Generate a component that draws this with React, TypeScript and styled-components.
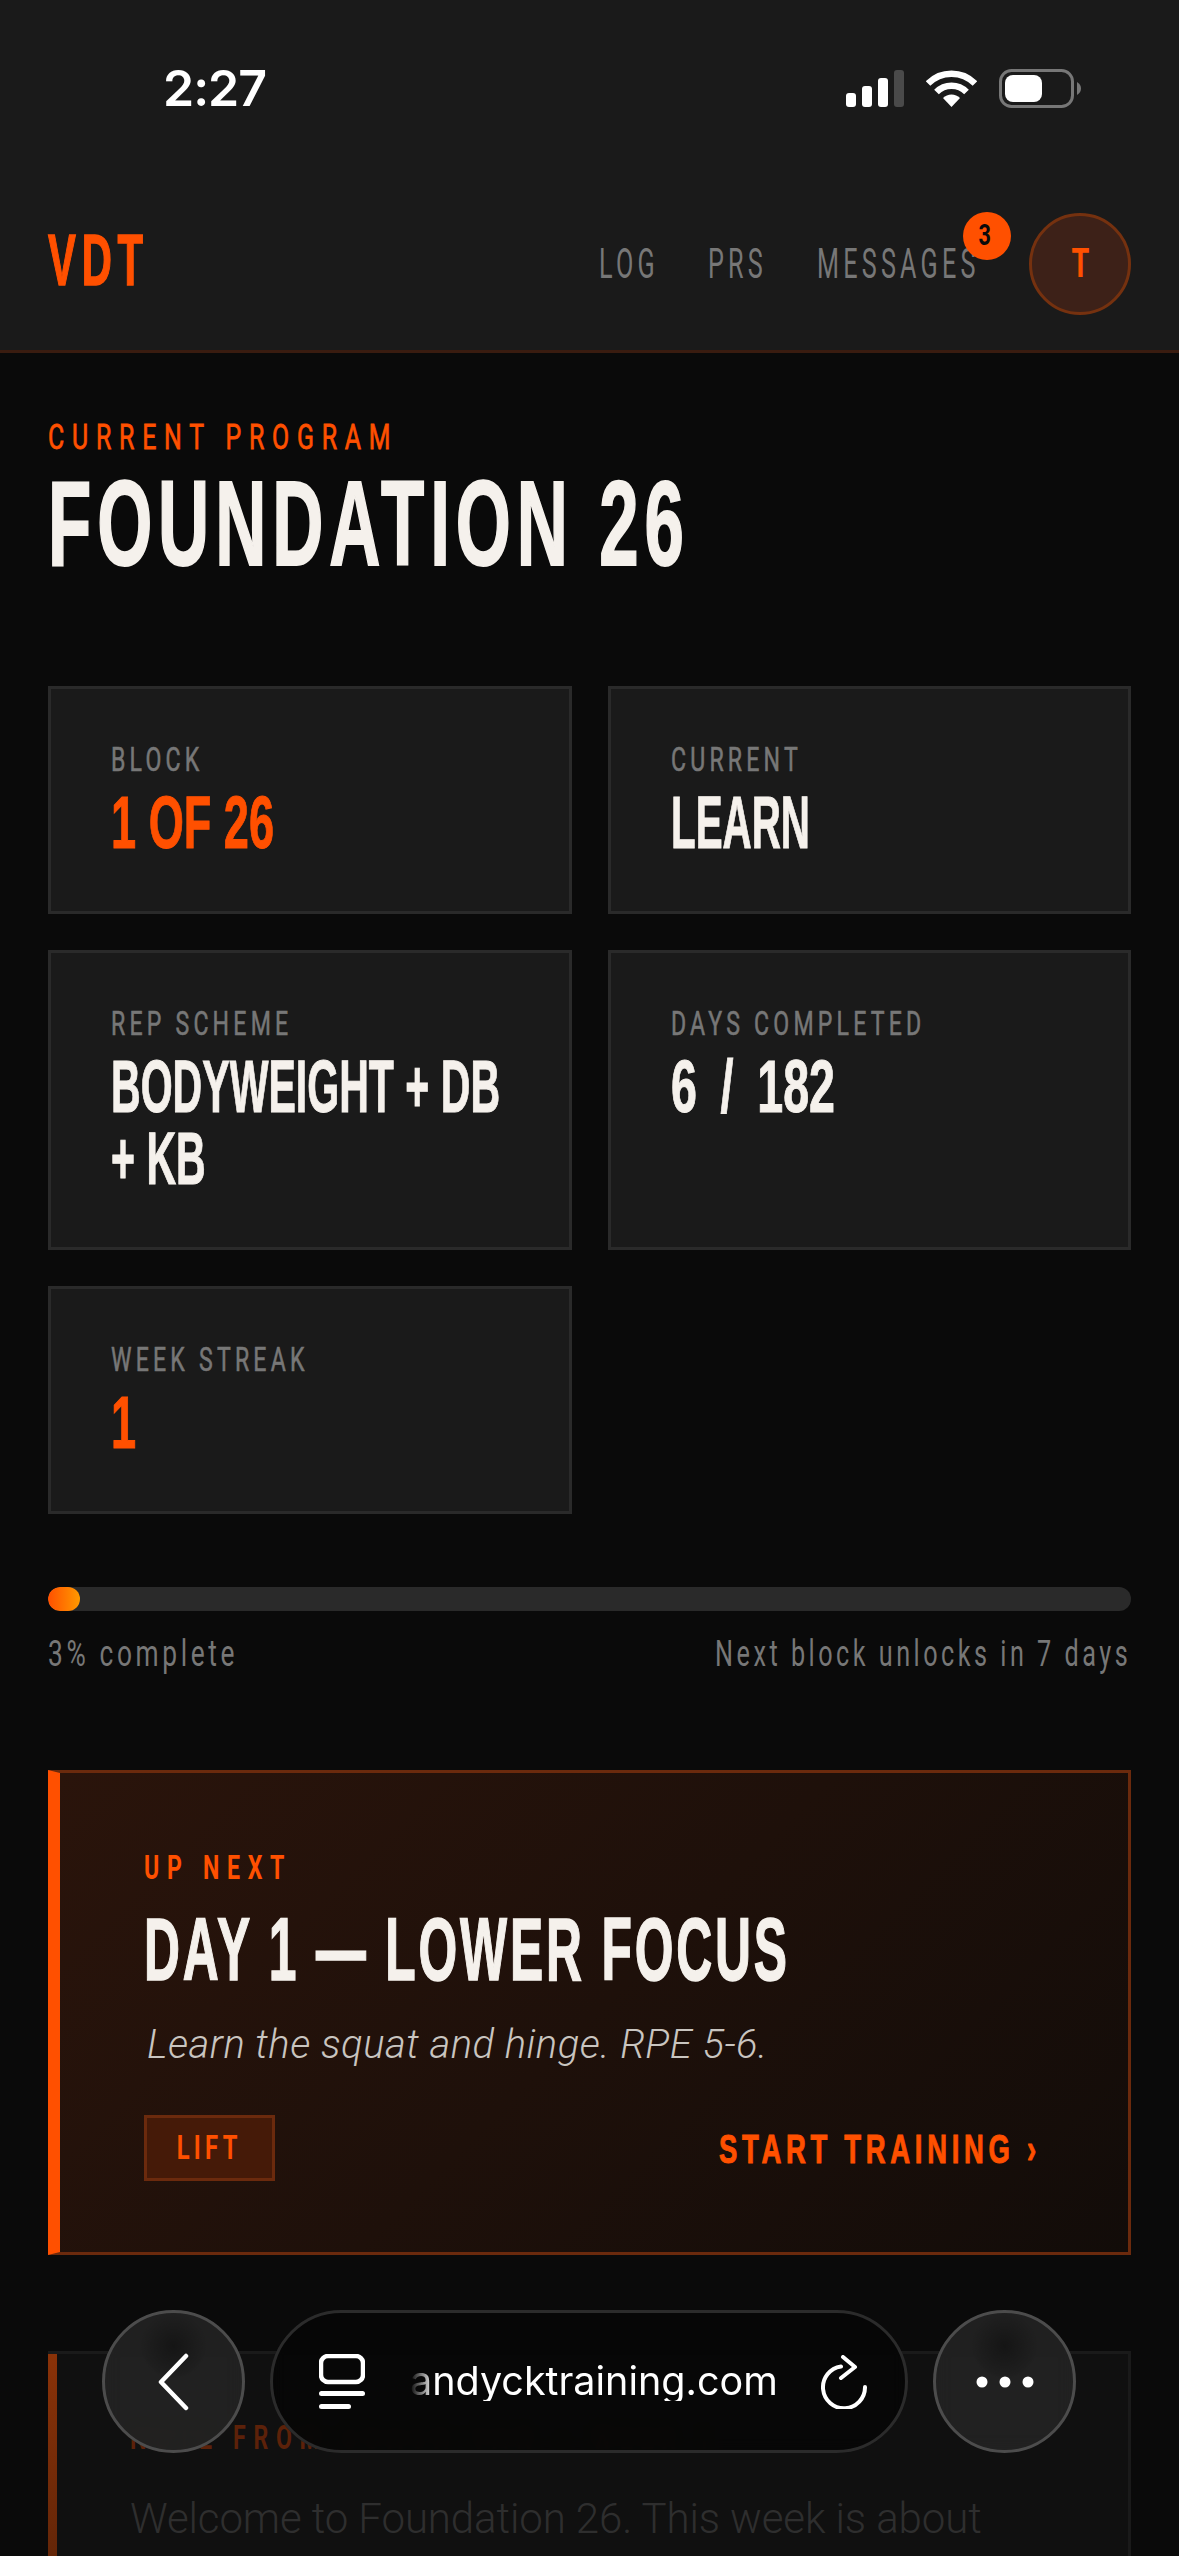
import React from 'react';
import styled, { createGlobalStyle } from 'styled-components';

const ORANGE = '#ff5000';
const CREAM = '#f5f1ec';
const DISPLAY = "'Liberation Sans Narrow', 'Liberation Sans', sans-serif";
const BODY = "'Liberation Sans Narrow', 'Roboto', sans-serif";

const GlobalStyle = createGlobalStyle`
  html, body { margin: 0; padding: 0; background: #0a0a0a; }
  * { box-sizing: border-box; }
`;

const Page = styled.div`
  position: relative;
  width: 1179px;
  height: 2556px;
  overflow: hidden;
  background: #0a0a0a;
`;

// squeezed text: the reference uses a very narrow display face
const Squeezed = styled.span<{ $x: number; $end?: boolean }>`
  display: block;
  width: ${(p) => 100 / p.$x}%;
  margin-left: ${(p) => (p.$end ? `${100 - 100 / p.$x}%` : '0')};
  text-align: ${(p) => (p.$end ? 'right' : 'left')};
  transform: scaleX(${(p) => p.$x});
  transform-origin: ${(p) => (p.$end ? 'right' : 'left')} center;
`;

const Narrowed = styled.span`
  display: inline-block;
  transform: scaleX(0.72);
`;

const Header = styled.header`
  background: #1a1a1a;
  border-bottom: 3px solid #3a1c10;
  height: 353px;
`;

const StatusBar = styled.div`
  height: 176px;
  padding: 0 98px 0 163px;
  display: flex;
  align-items: center;
  justify-content: space-between;
`;

const Time = styled.div`
  font: 600 50px/1 Inter, 'Liberation Sans', sans-serif;
  letter-spacing: -1px;
  color: #fff;
  white-space: nowrap;
`;

const StatusIcons = styled.div`
  display: flex;
  align-items: center;
  gap: 22px;
`;

const Nav = styled.nav`
  margin-top: 37px;
  padding: 0 48px;
  height: 102px;
  display: flex;
  align-items: center;
  justify-content: space-between;
`;

const Logo = styled.div`
  width: 95px;
  margin-top: -9px;
  font: 700 72px/1 ${DISPLAY};
  letter-spacing: 10px;
  -webkit-text-stroke: 1.5px ${ORANGE};
  color: ${ORANGE};
  white-space: nowrap;
`;

const NavRight = styled.div`
  display: flex;
  align-items: center;
`;

const NavLink = styled.a<{ $w: number }>`
  position: relative;
  display: block;
  width: ${(p) => p.$w}px;
  margin-right: 52px;
  font: 400 42px/1 ${BODY};
  letter-spacing: 7px;
  color: #777;
  white-space: nowrap;
`;

const Badge = styled.span`
  position: absolute;
  top: -31px;
  right: -34px;
  width: 48px;
  height: 48px;
  border-radius: 50%;
  background: ${ORANGE};
  color: #0a0a0a;
  font: 700 30px/46px ${BODY};
  text-align: center;
`;

const Avatar = styled.div`
  width: 102px;
  height: 102px;
  border-radius: 50%;
  background: #3d2118;
  border: 3px solid #75310f;
  color: ${ORANGE};
  font: 700 40px/96px ${BODY};
  text-align: center;
`;

const Main = styled.main`
  padding: 67px 48px 0;
`;

const Eyebrow = styled.div`
  font: 400 35px/36px ${BODY};
  letter-spacing: 11px;
  -webkit-text-stroke: 0.8px ${ORANGE};
  color: ${ORANGE};
  white-space: nowrap;
`;

const Title = styled.h1`
  margin: 8px 0 0;
  font: 700 120px/118px ${DISPLAY};
  letter-spacing: 10px;
  -webkit-text-stroke: 2px ${CREAM};
  color: ${CREAM};
  white-space: nowrap;
`;

const StatGrid = styled.div`
  margin-top: 104px;
  display: grid;
  grid-template-columns: minmax(0, 1fr) minmax(0, 1fr);
  gap: 36px;
`;

const StatCard = styled.div`
  background: #1a1a1a;
  border: 3px solid #2a2a2a;
  padding: 53px 60px 52px;
`;

const StatLabel = styled.div`
  font: 400 33px/36px ${BODY};
  letter-spacing: 6px;
  -webkit-text-stroke: 0.6px #777;
  color: #777;
  white-space: nowrap;
`;

const StatValue = styled.div<{ $accent?: boolean; $spread?: number }>`
  margin-top: 9px;
  font: 700 74px/72px ${DISPLAY};
  word-spacing: ${(p) => p.$spread ?? 0}px;
  -webkit-text-stroke: 1px ${(p) => (p.$accent ? ORANGE : CREAM)};
  color: ${(p) => (p.$accent ? ORANGE : CREAM)};
`;

const ProgressTrack = styled.div`
  margin-top: 73px;
  height: 24px;
  border-radius: 12px;
  background: #2a2a2a;
  overflow: hidden;
`;

const ProgressFill = styled.div`
  height: 100%;
  border-radius: 12px;
  background: linear-gradient(90deg, ${ORANGE}, #ff9a00);
`;

const ProgressMeta = styled.div`
  margin-top: 23px;
  display: flex;
  justify-content: space-between;
  font: 400 36px/40px ${BODY};
  letter-spacing: 5px;
  color: #777;
  white-space: nowrap;
`;

const MetaSide = styled.div`
  flex: 1;
`;

const UpNext = styled.section`
  margin-top: 96px;
  height: 485px;
  border: 3px solid #6b2a0d;
  border-left: 12px solid ${ORANGE};
  background: linear-gradient(135deg, #2a140b, #120c09);
  padding: 77px 84px 0;
`;

const UpNextLabel = styled.div`
  font: 700 33px/36px ${BODY};
  letter-spacing: 11px;
  color: ${ORANGE};
  white-space: nowrap;
`;

const UpNextTitle = styled.h2`
  margin: 20px 0 0;
  font: 700 89px/86px ${DISPLAY};
  letter-spacing: 5px;
  -webkit-text-stroke: 1.5px ${CREAM};
  color: ${CREAM};
  white-space: nowrap;
`;

const UpNextCopy = styled.p`
  margin: 27px 0 0 3px;
  font: italic 300 40px/52px Roboto, sans-serif;
  letter-spacing: 0.5px;
  color: #c9c5c0;
  white-space: nowrap;
`;

const UpNextFooter = styled.div`
  margin-top: 44px;
  display: flex;
  align-items: center;
  justify-content: space-between;
`;

const Tag = styled.div`
  width: 131px;
  height: 66px;
  border: 3px solid #6b2a0d;
  background: #451a08;
  color: ${ORANGE};
  font: 700 33px/60px ${BODY};
  letter-spacing: 6px;
  text-align: center;
`;

const StartLink = styled.a`
  width: 325px;
  margin-top: 3px;
  font: 700 41px/1 ${DISPLAY};
  letter-spacing: 7px;
  -webkit-text-stroke: 1px ${ORANGE};
  color: ${ORANGE};
  white-space: nowrap;
`;

const CoachNote = styled.section`
  margin-top: 96px;
  height: 400px;
  background: linear-gradient(#8a3208, #3f1a08) left top / 9px 100% no-repeat, #101010;
  border-top: 3px solid #1a1a1a;
  border-right: 3px solid #1a1a1a;
  padding: 66px 73px 0 82px;
`;

const CoachLabel = styled.div`
  font: 700 33px/36px ${BODY};
  letter-spacing: 11px;
  color: #5c2109;
  white-space: nowrap;
`;

const CoachCopy = styled.p`
  margin: 36px 0 0;
  font: 300 42px/54px Roboto, sans-serif;
  letter-spacing: -0.1px;
  color: #2e2e2e;
  white-space: nowrap;
`;

const BrowserBar = styled.div`
  position: absolute;
  left: 102px;
  right: 103px;
  bottom: 103px;
  height: 143px;
  display: flex;
  gap: 25px;
`;

const GlassButton = styled.div`
  flex: none;
  width: 143px;
  height: 143px;
  border-radius: 50%;
  display: flex;
  align-items: center;
  justify-content: center;
  border: 3px solid #4c4c4c;
  background: radial-gradient(circle 34px at 50% 24%, rgba(0, 0, 0, 0.35), transparent), rgba(34, 34, 34, 0.94);
  backdrop-filter: blur(10px);
`;

const AddressPill = styled.div`
  flex: 1;
  height: 143px;
  border-radius: 72px;
  border: 3px solid #2b2b2b;
  background: rgba(6, 6, 6, 0.94);
  backdrop-filter: blur(8px);
  display: flex;
  align-items: center;
  padding: 0 38px 0 46px;
`;

const Url = styled.div`
  flex: 1;
  margin-left: 45px;
  font: 400 39.5px/1 Inter, 'Liberation Sans', sans-serif;
  color: #fff;
  white-space: nowrap;
  -webkit-mask-image: linear-gradient(90deg, transparent 0, #000 24px);
  mask-image: linear-gradient(90deg, transparent 0, #000 24px);
`;

const App: React.FC = () => (
  <Page>
    <GlobalStyle />
    <Header>
      <StatusBar>
        <Time>2:27</Time>
        <StatusIcons>
          <svg width="58" height="37" viewBox="0 0 58 37">
            <rect x="0" y="23" width="10" height="14" rx="3" fill="#fff" />
            <rect x="16" y="16" width="10" height="21" rx="3" fill="#fff" />
            <rect x="32" y="8" width="10" height="29" rx="3" fill="#fff" />
            <rect x="48" y="0" width="10" height="37" rx="3" fill="#4a4a4a" />
          </svg>
          <svg width="51" height="37" viewBox="0 0 51 37">
            <path d="M2 13.5 A33 33 0 0 1 49 13.5" fill="none" stroke="#fff" strokeWidth="6.5" />
            <path d="M10.5 22 A21 21 0 0 1 40.5 22" fill="none" stroke="#fff" strokeWidth="6.5" />
            <path d="M25.5 37 L17 28 A12 12 0 0 1 34 28 Z" fill="#fff" />
          </svg>
          <svg width="82" height="39" viewBox="0 0 82 39">
            <rect x="1.5" y="1.5" width="72" height="36" rx="11" fill="none" stroke="#777" strokeWidth="3" />
            <rect x="6" y="6" width="37" height="27" rx="8" fill="#fff" />
            <path d="M78 13 C81 15 82 17 82 19.5 C82 22 81 24 78 26 Z" fill="#777" />
          </svg>
        </StatusIcons>
      </StatusBar>
      <Nav>
        <Logo><Squeezed $x={0.58}>VDT</Squeezed></Logo>
        <NavRight>
          <NavLink $w={57}><Squeezed $x={0.6}>LOG</Squeezed></NavLink>
          <NavLink $w={57}><Squeezed $x={0.6}>PRS</Squeezed></NavLink>
          <NavLink $w={160}>
            <Squeezed $x={0.6}>MESSAGES</Squeezed>
            <Badge><Narrowed>3</Narrowed></Badge>
          </NavLink>
          <Avatar><Narrowed>T</Narrowed></Avatar>
        </NavRight>
      </Nav>
    </Header>
    <Main>
      <Eyebrow><Squeezed $x={0.71}>CURRENT PROGRAM</Squeezed></Eyebrow>
      <Title><Squeezed $x={0.59}>FOUNDATION 26</Squeezed></Title>
      <StatGrid>
        <StatCard>
          <StatLabel><Squeezed $x={0.7}>BLOCK</Squeezed></StatLabel>
          <StatValue $accent><Squeezed $x={0.61}>1 OF 26</Squeezed></StatValue>
        </StatCard>
        <StatCard>
          <StatLabel><Squeezed $x={0.7}>CURRENT</Squeezed></StatLabel>
          <StatValue><Squeezed $x={0.545}>LEARN</Squeezed></StatValue>
        </StatCard>
        <StatCard>
          <StatLabel><Squeezed $x={0.7}>REP SCHEME</Squeezed></StatLabel>
          <StatValue><Squeezed $x={0.555}>BODYWEIGHT + DB + KB</Squeezed></StatValue>
        </StatCard>
        <StatCard>
          <StatLabel><Squeezed $x={0.7}>DAYS COMPLETED</Squeezed></StatLabel>
          <StatValue $spread={17}><Squeezed $x={0.63}>6 / 182</Squeezed></StatValue>
        </StatCard>
        <StatCard>
          <StatLabel><Squeezed $x={0.7}>WEEK STREAK</Squeezed></StatLabel>
          <StatValue $accent><Squeezed $x={0.61}>1</Squeezed></StatValue>
        </StatCard>
      </StatGrid>
      <ProgressTrack>
        <ProgressFill style={{ width: '3%' }} />
      </ProgressTrack>
      <ProgressMeta>
        <MetaSide><Squeezed $x={0.73}>3% complete</Squeezed></MetaSide>
        <MetaSide><Squeezed $x={0.7} $end>Next block unlocks in 7 days</Squeezed></MetaSide>
      </ProgressMeta>
      <UpNext>
        <UpNextLabel><Squeezed $x={0.7}>UP NEXT</Squeezed></UpNextLabel>
        <UpNextTitle><Squeezed $x={0.56}>DAY 1 — LOWER FOCUS</Squeezed></UpNextTitle>
        <UpNextCopy>Learn the squat and hinge. RPE 5-6.</UpNextCopy>
        <UpNextFooter>
          <Tag><Narrowed>LIFT</Narrowed></Tag>
          <StartLink><Squeezed $x={0.67}>START TRAINING ›</Squeezed></StartLink>
        </UpNextFooter>
      </UpNext>
      <CoachNote>
        <CoachLabel><Squeezed $x={0.7}>NOTE FROM COACH VAN — WEEK 1</Squeezed></CoachLabel>
        <CoachCopy>Welcome to Foundation 26. This week is about</CoachCopy>
      </CoachNote>
    </Main>
    <BrowserBar>
      <GlassButton>
        <svg width="36" height="58" viewBox="0 0 36 58">
          <path d="M30 3 L5 29 L30 55" fill="none" stroke="#fff" strokeWidth="4.5" strokeLinecap="round" strokeLinejoin="round" />
        </svg>
      </GlassButton>
      <AddressPill>
        <svg width="46" height="55" viewBox="0 0 46 55">
          <rect x="2" y="2" width="42" height="26" rx="7" fill="none" stroke="#fff" strokeWidth="4.5" />
          <rect x="0" y="37" width="46" height="5" rx="2.5" fill="#fff" />
          <rect x="0" y="50" width="32" height="5" rx="2.5" fill="#fff" />
        </svg>
        <Url>andycktraining.com</Url>
        <svg width="46" height="54" viewBox="0 0 46 54">
          <path d="M20 11.5 A21 21 0 1 0 44 32" fill="none" stroke="#fff" strokeWidth="4" strokeLinecap="round" />
          <path d="M22 2 L34 12 L20 23" fill="none" stroke="#fff" strokeWidth="4" strokeLinecap="round" strokeLinejoin="round" />
        </svg>
      </AddressPill>
      <GlassButton>
        <svg width="60" height="14" viewBox="0 0 60 14">
          <circle cx="7" cy="7" r="5.5" fill="#fff" />
          <circle cx="30" cy="7" r="5.5" fill="#fff" />
          <circle cx="53" cy="7" r="5.5" fill="#fff" />
        </svg>
      </GlassButton>
    </BrowserBar>
  </Page>
);

export default App;
